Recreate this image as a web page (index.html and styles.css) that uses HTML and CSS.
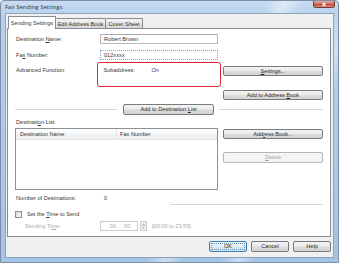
FILE: index.html
```html
<!DOCTYPE html>
<html>
<head>
<meta charset="utf-8">
<link rel="stylesheet" href="styles.css">
</head>
<body>
<div class="window">
  <div class="titlebar">
    <span class="title">Fax Sending Settings</span>
    <span class="close"><svg width="8" height="5" viewBox="0 0 8 5"><path d="M2.5 0.8 L5.5 4.2 M5.5 0.8 L2.5 4.2" stroke="#fff" stroke-width="1.1"/></svg></span>
  </div>
  <div class="client">
    <div class="tabs">
      <div class="tab active">Sending Settings</div>
      <div class="tab t2">Edit Address Book</div>
      <div class="tab t3">Cover Sheet</div>
    </div>
    <div class="panel">
      <div class="row r1">
        <div class="lbl">Destination <u>N</u>ame:</div>
        <div class="input">Robert Brown</div>
      </div>
      <div class="row r2">
        <div class="lbl">Fa<u>x</u> Number:</div>
        <div class="input focus">012xxxx</div>
      </div>
      <div class="row r3">
        <div class="lbl lbl-top">Advanced Function:</div>
        <div class="callout"><span class="sub">Subaddress:</span><span>On</span></div>
        <div class="side">
          <div class="btn b-settings"><span><u>S</u>ettings...</span></div>
          <div class="btn b-addbook"><span>Add to Address <u>B</u>ook</span></div>
        </div>
      </div>
      <div class="row r4">
        <div class="sep sep-left"></div>
        <div class="btn b-adddest"><span>Add to Destination <u>L</u>ist</span></div>
        <div class="sep sep-right"></div>
      </div>
      <div class="row r5">
        <div class="lbl">Destinati<u>o</u>n List:</div>
      </div>
      <div class="row r6">
        <div class="list">
          <div class="list-head">
            <div class="col c1">Destination Name</div>
            <div class="col c2">Fax Number</div>
          </div>
        </div>
        <div class="side side2">
          <div class="btn b-abook"><span>Add<u>r</u>ess Book...</span></div>
          <div class="btn disabled b-delete"><span><u>D</u>elete</span></div>
        </div>
      </div>
      <div class="row r7">
        <div class="lbl">Number of Destinations:</div>
        <div class="val">0</div>
      </div>
      <div class="row r7b">
        <div class="sep sep-num"></div>
      </div>
      <div class="row r8">
        <div class="check"></div>
        <div class="check-lbl">Set the <u>T</u>ime to Send</div>
      </div>
      <div class="row r9">
        <div class="lbl dis lbl-ind">Sending Ti<u>m</u>e:</div>
        <div class="time">00 &nbsp;:&nbsp; 00</div>
        <div class="spin">
          <div class="spin-up"><svg width="3" height="2" viewBox="0 0 3 2"><path d="M0 2 L1.5 0 L3 2Z" fill="#b8b8b8"/></svg></div>
          <div class="spin-dn"><svg width="3" height="2" viewBox="0 0 3 2"><path d="M0 0 L1.5 2 L3 0Z" fill="#b8b8b8"/></svg></div>
        </div>
        <div class="range dis">[00:00 to 23:59]</div>
      </div>
    </div>
    <div class="footer">
      <div class="btn fbtn ok"><span>OK</span></div>
      <div class="btn fbtn"><span>Cancel</span></div>
      <div class="btn fbtn"><span>Help</span></div>
    </div>
  </div>
</div>
</body>
</html>
```
FILE: styles.css
```css
* { box-sizing: border-box; }
html, body { margin: 0; padding: 0; }
body {
  width: 339px;
  height: 263px;
  overflow: hidden;
  background: #fff;
  font-family: "Liberation Sans", Arial, sans-serif;
  font-size: 5.6px;
  color: #363636;
}
u { text-decoration: underline; text-underline-offset: 1px; }

.window {
  width: 339px;
  height: 263px;
  display: flex;
  flex-direction: column;
  border: 1px solid #7b8ea3;
  border-radius: 4px 4px 0 0;
  background:
    linear-gradient(115deg, rgba(255,255,255,0) 58%, rgba(255,255,255,0.45) 62%, rgba(255,255,255,0) 66%, rgba(255,255,255,0) 74%, rgba(255,255,255,0.4) 78%, rgba(255,255,255,0) 82%),
    linear-gradient(#c9ddf2 0px, #b6d0ec 14px, #a4c4e6 100%);
}

.titlebar {
  height: 12px;
  display: flex;
  justify-content: space-between;
  align-items: flex-start;
}
.title {
  padding-left: 4px;
  padding-top: 3px;
  font-family: "Open Sans", "Liberation Sans", sans-serif;
  font-size: 6px;
  line-height: 7px;
  color: #26333f;
}
.close {
  width: 22px;
  height: 7px;
  margin-right: 3px;
  border: 1px solid #7a3a33;
  border-top: none;
  border-radius: 0 0 3px 3px;
  background: linear-gradient(#e0aaa0, #cf6f62 50%, #c2483b 51%, #d98a72);
  display: flex;
  align-items: center;
  justify-content: center;
}

.client {
  height: 245px;
  margin: 0 4px 4px 4px;
  border: 1px solid #8fa3b9;
  background: #f0f0f0;
  display: flex;
  flex-direction: column;
}

.tabs {
  position: relative;
  z-index: 1;
  height: 13px;
  margin: 2px 0 -1px 2px;
  display: flex;
  align-items: flex-end;
}
.tab {
  height: 10px;
  margin-bottom: 1px;
  border: 1px solid #898c95;
  border-bottom: none;
  border-radius: 1px 1px 0 0;
  background: linear-gradient(#f3f3f3, #e6e6e6 50%, #dcdcdc 51%, #d8d8d8);
  display: flex;
  align-items: center;
  justify-content: center;
  padding-top: 1px;
}
.tab.active {
  width: 48px;
  height: 13px;
  margin-bottom: 0;
  background: #fff;
  padding-bottom: 1px;
}
.t2 { width: 50px; border-left: none; }
.t3 { width: 37px; border-left: none; }

.panel {
  height: 209px;
  width: 324px;
  margin-left: 1px;
  border: 1px solid #898c95;
  background: #fff;
  padding: 0 7px 0 8px;
  display: flex;
  flex-direction: column;
}

.row { display: flex; align-items: center; }
.lbl { width: 84px; flex: none; line-height: 7px; }
.dis { color: #a8a8a8; }

.input {
  width: 118px;
  height: 10px;
  border: 1px solid #b7b9be;
  border-top-color: #a9abb1;
  padding-left: 3px;
  line-height: 8px;
  background: #fff;
}
.input.focus { border: 1px dotted #7da2ce; }

.r1 { margin-top: 5px; height: 10px; }
.r2 { margin-top: 6px; height: 10px; }

.r3 { margin-top: 2px; height: 38px; align-items: flex-start; }
.lbl-top { padding-top: 5px; }
.callout {
  margin-left: -3px;
  width: 124px;
  height: 25px;
  border: 1.5px solid #e3262f;
  border-radius: 3px;
  display: flex;
  padding: 3.5px 0 0 5.5px;
  line-height: 7px;
}
.sub { width: 48px; }
.side {
  width: 100px;
  margin-left: 2px;
  display: flex;
  flex-direction: column;
}
.b-settings { margin-top: 4px; }
.b-addbook { margin-top: 14px; }

.btn {
  height: 10px;
  border: 1px solid #7a7a7a;
  border-radius: 2px;
  background: linear-gradient(#f3f3f3 0%, #ebebeb 48%, #dddddd 52%, #d2d2d2 100%);
  display: flex;
  align-items: center;
  justify-content: center;
  line-height: 7px;
  color: #2a2a2a;
}
.btn.disabled {
  border-color: #b5b8ba;
  background: #f4f4f4;
  color: #a6a6a6;
}

.r4 { margin-top: 4px; height: 11px; }
.sep { height: 1px; background: #d5d5d5; }
.sep-left { margin-left: -1px; width: 102px; }
.b-adddest { margin-left: 6px; width: 91px; height: 11px; }
.sep-right { margin-left: 5px; width: 104px; }

.r5 { margin-top: 3px; height: 8px; }
.r6 { margin-top: 2px; height: 62px; align-items: flex-start; }
.list {
  margin-left: -1px;
  width: 203px;
  height: 62px;
  border: 1px solid #8a8f98;
  background: #fff;
}
.list-head {
  height: 11px;
  display: flex;
  background: linear-gradient(#ffffff, #f7f8f9 50%, #f1f2f3 51%, #eeeff0);
  border-bottom: 1px solid #e3e4e6;
}
.col { line-height: 10px; padding-left: 4px; }
.c1 { width: 101px; border-right: 1px solid #e3e4e6; }
.c2 { padding-left: 3px; }
.side2 { margin-left: 5px; }
.b-abook { margin-top: 1px; }
.b-delete { margin-top: 13px; height: 11px; }

.r7 { margin-top: 4px; height: 8px; }
.val { line-height: 7px; padding-left: 4px; }
.r7b { margin-top: 2px; height: 1px; }
.sep-num { margin-left: 154px; width: 153px; }

.r8 { margin-top: 5px; height: 8px; }
.check {
  width: 7px;
  height: 7px;
  margin-left: -1px;
  border: 1px solid #8e8f8f;
  background: linear-gradient(135deg, #dcdcdc, #f6f6f6);
}
.check-lbl { margin-left: 5px; line-height: 7px; }

.r9 { margin-top: 3px; height: 10px; }
.lbl-ind { padding-left: 9px; }
.time {
  width: 38px;
  height: 10px;
  border: 1px solid #c9cacc;
  color: #a8a8a8;
  line-height: 8px;
  text-align: right;
  padding-right: 7px;
}
.spin {
  margin-left: 2px;
  width: 7px;
  height: 10px;
  display: flex;
  flex-direction: column;
}
.spin-up, .spin-dn {
  height: 5px;
  border: 1px solid #c9cacc;
  background: #f4f4f4;
  display: flex;
  align-items: center;
  justify-content: center;
}
.spin-up { border-radius: 1px 1px 0 0; }
.spin-dn { border-top: none; border-radius: 0 0 1px 1px; }
.range { margin-left: 5px; line-height: 7px; }

.footer {
  margin-top: 4px;
  display: flex;
  justify-content: flex-end;
  padding-right: 2px;
  gap: 4px;
}
.fbtn { width: 38px; height: 11px; }
.ok {
  border-color: #3c7fb1;
  background: linear-gradient(#f2f8fc 0%, #e6f2fa 48%, #d5e9f6 52%, #c9e2f3 100%);
  outline: 1px dotted #6d8fb0;
  outline-offset: -3px;
}
```
